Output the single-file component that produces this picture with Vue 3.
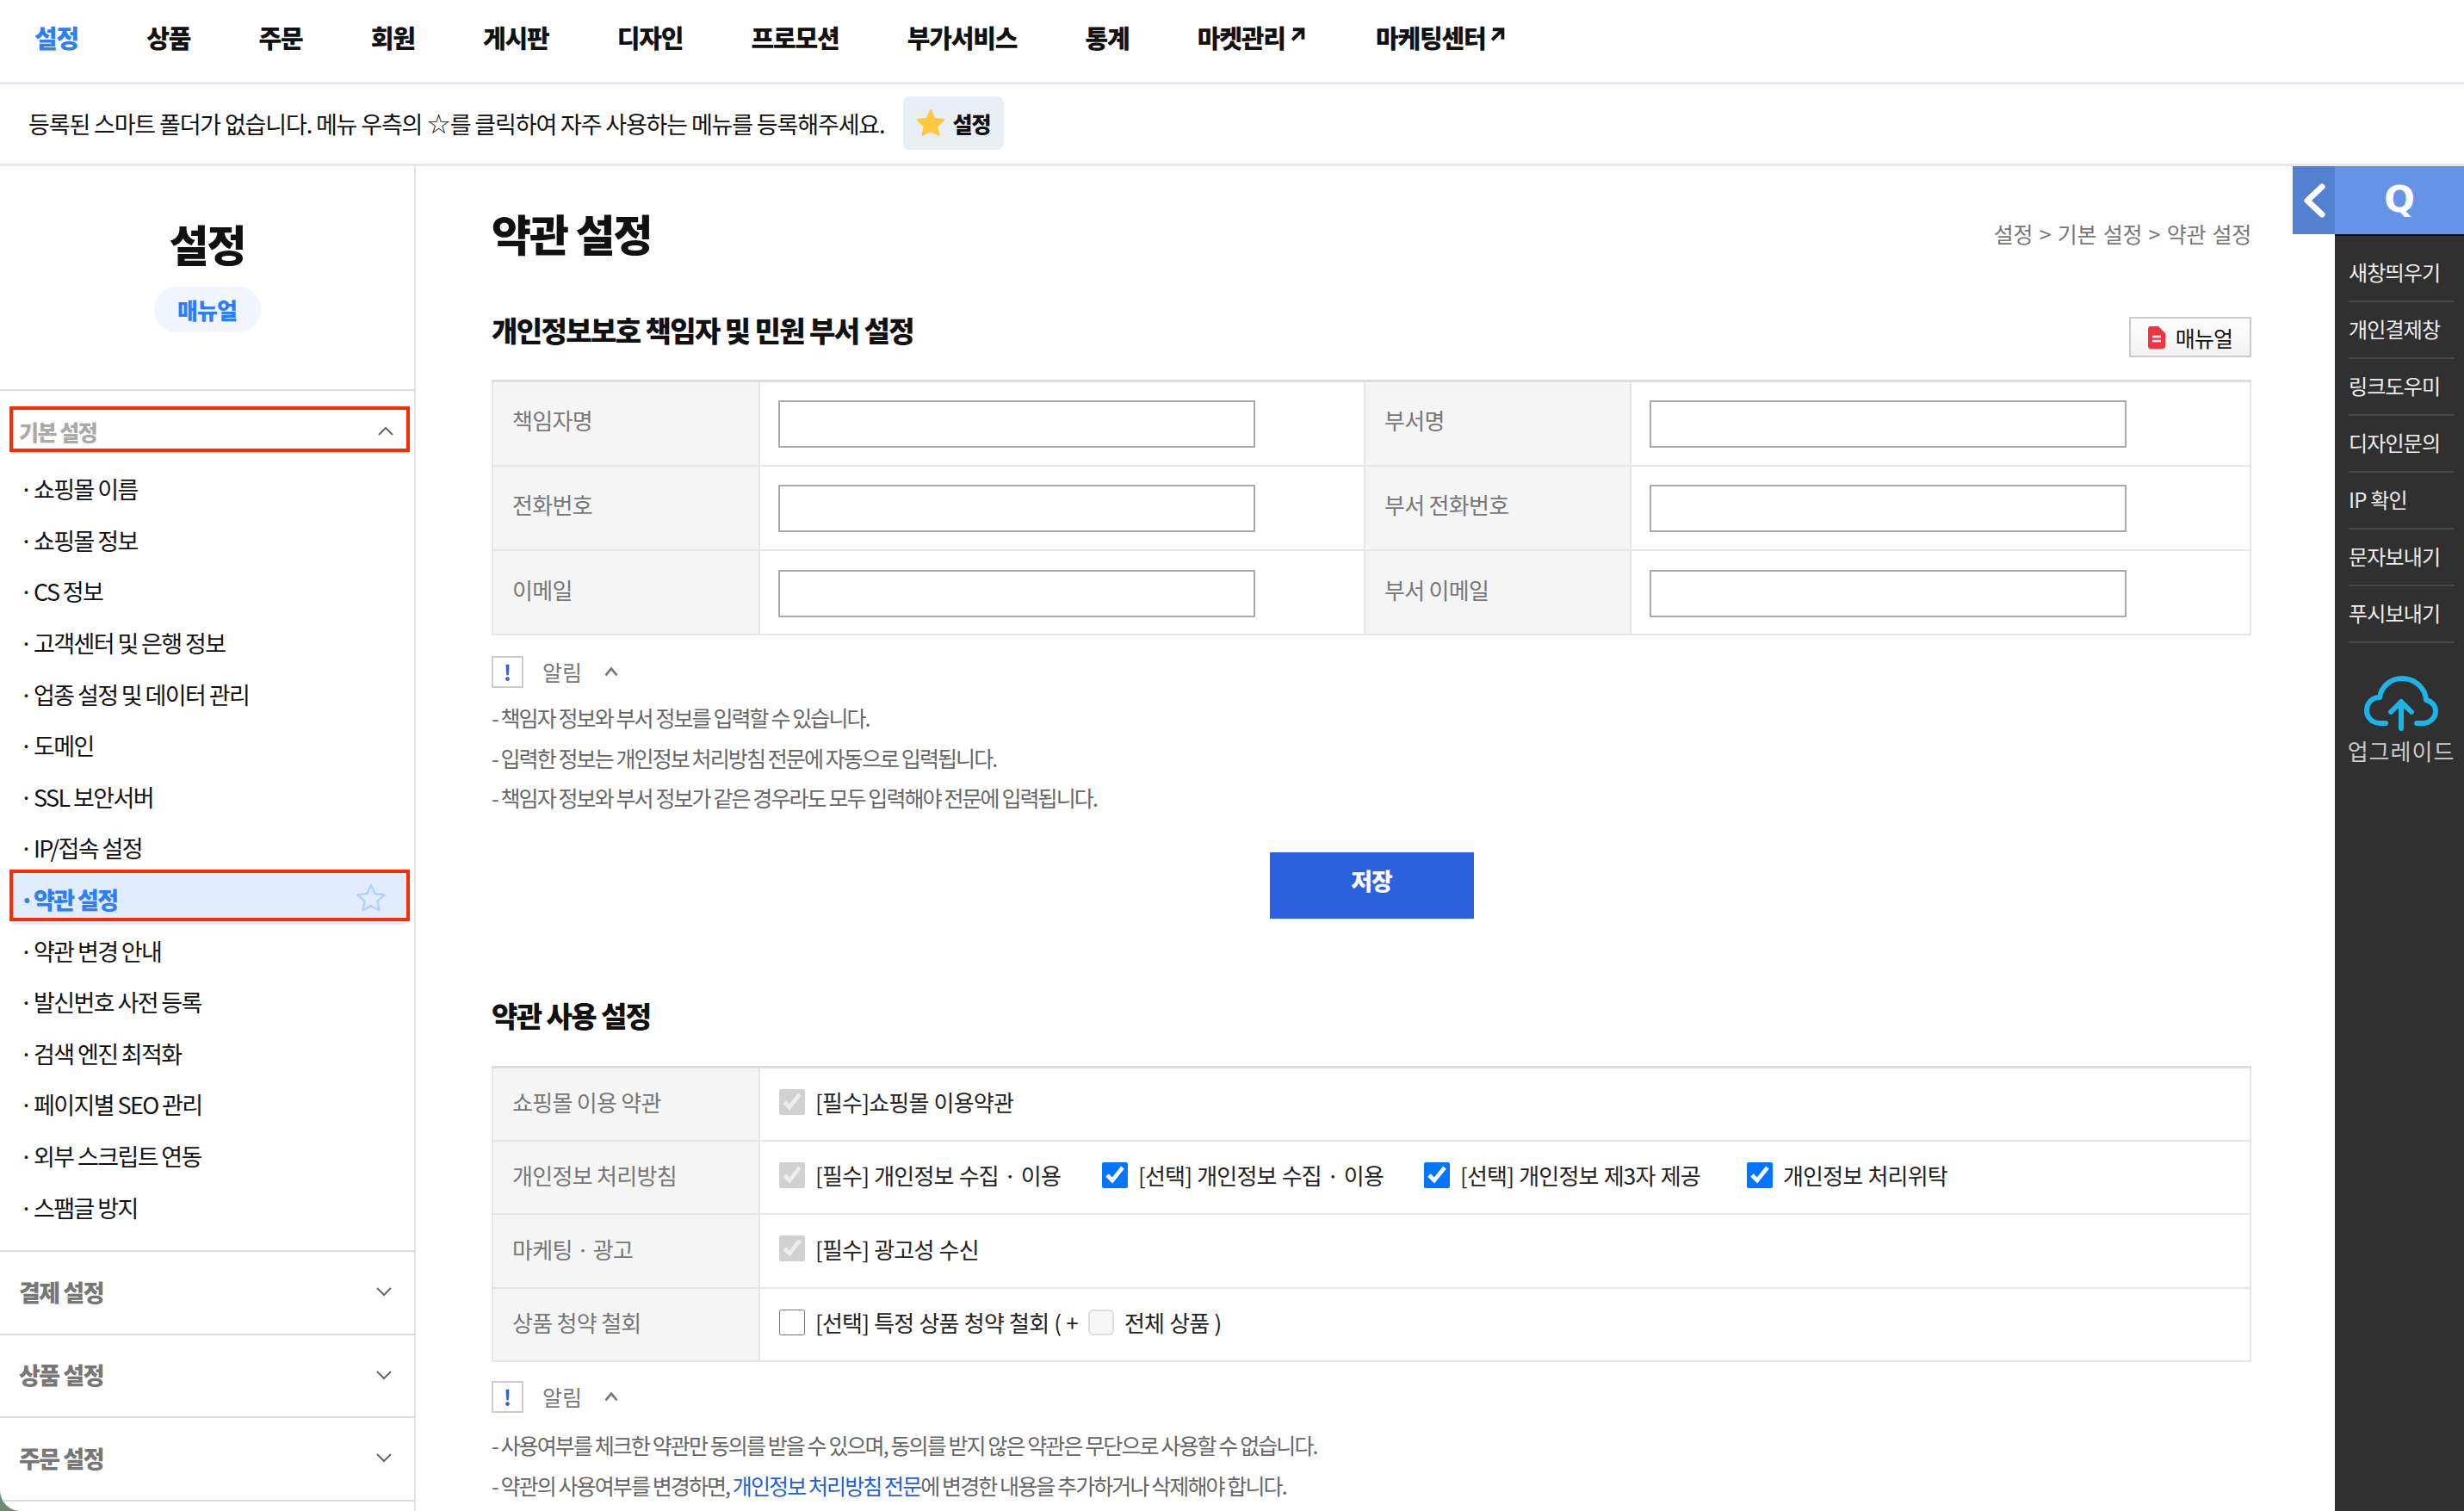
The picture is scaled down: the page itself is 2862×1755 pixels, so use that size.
<template>
  <div class="page">
    <nav class="gnb">
      <a v-for="(m, i) in gnb" :key="m.name" class="gnb-item" :class="{ on: i === 0 }">
        {{ m.name }}
        <svg v-if="m.ext" class="ext" viewBox="0 0 14 14"><path d="M3 2.5h9v9M11.5 3L2.5 12" fill="none" stroke="#111" stroke-width="3" /></svg>
      </a>
    </nav>

    <div class="smart-bar">
      <span>등록된 스마트 폴더가 없습니다. 메뉴 우측의 <b class="star-glyph">☆</b>를 클릭하여 자주 사용하는 메뉴를 등록해주세요.</span>
      <button class="smart-btn">
        <svg width="36" height="34" viewBox="0 0 24 24"><path d="M12 1.5l3.2 6.9 7.5.9-5.5 5.1 1.4 7.4L12 18.1l-6.6 3.7 1.4-7.4L1.3 9.3l7.5-.9z" fill="#ffc83d" stroke="#ffc83d" stroke-width="1.5" stroke-linejoin="round" /></svg>
        설정
      </button>
    </div>

    <div class="body">
      <aside class="side">
        <div class="side-head">
          <h2>설정</h2>
          <span class="pill">매뉴얼</span>
        </div>
        <div class="group-open">
          <div class="group-title first">
            기본 설정
            <svg class="chev" viewBox="0 0 20 12"><path d="M2 10l8-8 8 8" /></svg>
          </div>
          <ul class="side-list">
            <li v-for="item in sideItems" :key="item" :class="{ active: item === '약관 설정' }">
              <i>·</i>{{ item }}
              <svg v-if="item === '약관 설정'" class="side-star" viewBox="0 0 24 24"><path d="M12 2.5l2.9 6.3 6.9.8-5.1 4.7 1.4 6.8-6.1-3.4-6.1 3.4 1.4-6.8-5.1-4.7 6.9-.8z" fill="none" stroke="#b5d0ff" stroke-width="1.6" stroke-linejoin="round" /></svg>
            </li>
          </ul>
        </div>
        <div v-for="g in sideGroups" :key="g" class="group-title">
          {{ g }}
          <svg class="chev" viewBox="0 0 20 12"><path d="M2 2l8 8 8-8" /></svg>
        </div>
      </aside>

      <main class="main">
        <div class="page-head">
          <h1>약관 설정</h1>
          <span class="crumb">설정 &gt; 기본 설정 &gt; 약관 설정</span>
        </div>

        <div class="section-head">
          <h3>개인정보보호 책임자 및 민원 부서 설정</h3>
          <button class="manual-btn">
            <svg width="20" height="26" viewBox="0 0 20 26"><path d="M0 3a3 3 0 0 1 3-3h9l8 8v15a3 3 0 0 1-3 3H3a3 3 0 0 1-3-3z" fill="#f5333f" /><path d="M5 12h10M5 17h10" stroke="#fff" stroke-width="2.5" /></svg>
            매뉴얼
          </button>
        </div>

        <table class="form-table contact">
          <colgroup>
            <col class="col-th" />
            <col class="col-td" />
            <col class="col-th2" />
            <col />
          </colgroup>
          <tbody>
            <tr v-for="row in contactRows" :key="row[0]">
              <th>{{ row[0] }}</th>
              <td><input type="text" class="txt" /></td>
              <th>{{ row[1] }}</th>
              <td><input type="text" class="txt" /></td>
            </tr>
          </tbody>
        </table>

        <div class="notice-head">
          <span class="bang">!</span>
          <span>알림</span>
          <svg class="caret" viewBox="0 0 14 10"><path d="M2 8l5-6 5 6" /></svg>
        </div>
        <p v-for="n in notes1" :key="n" class="note">{{ n }}</p>

        <div class="save-row"><button class="save">저장</button></div>

        <h3 class="terms-title">약관 사용 설정</h3>

        <table class="form-table terms">
          <tbody>
            <tr>
              <th>쇼핑몰 이용 약관</th>
              <td><label class="chk"><input type="checkbox" checked disabled />[필수]쇼핑몰 이용약관</label></td>
            </tr>
            <tr>
              <th>개인정보 처리방침</th>
              <td>
                <label v-for="c in privacyChecks" :key="c.text" class="chk" :style="{ width: c.w + 'px' }">
                  <input type="checkbox" checked :disabled="c.locked" />{{ c.text }}
                </label>
              </td>
            </tr>
            <tr>
              <th>마케팅 · 광고</th>
              <td><label class="chk"><input type="checkbox" checked disabled />[필수] 광고성 수신</label></td>
            </tr>
            <tr>
              <th>상품 청약 철회</th>
              <td>
                <label class="chk"><input type="checkbox" />[선택] 특정 상품 청약 철회 ( +</label>
                <label class="chk sub"><input type="checkbox" disabled />전체 상품 )</label>
              </td>
            </tr>
          </tbody>
        </table>

        <div class="notice-head">
          <span class="bang">!</span>
          <span>알림</span>
          <svg class="caret" viewBox="0 0 14 10"><path d="M2 8l5-6 5 6" /></svg>
        </div>
        <p class="note">- 사용여부를 체크한 약관만 동의를 받을 수 있으며, 동의를 받지 않은 약관은 무단으로 사용할 수 없습니다.</p>
        <p class="note">- 약관의 사용여부를 변경하면, <a class="link">개인정보 처리방침 전문</a>에 변경한 내용을 추가하거나 삭제해야 합니다.</p>
      </main>
    </div>

    <!-- 우측 퀵메뉴 -->
    <div class="quick">
      <div class="quick-top">
        <span class="quick-toggle">
          <svg width="28" height="40" viewBox="0 0 28 40"><path d="M23 4L6 20l17 16" fill="none" stroke="#fff" stroke-width="7" stroke-linejoin="round" stroke-linecap="round" /></svg>
        </span>
        <span class="quick-q">Q</span>
      </div>
      <div class="quick-panel">
        <ul>
          <li v-for="q in quickItems" :key="q">{{ q }}</li>
        </ul>
        <div class="upgrade">
          <svg width="88" height="66" viewBox="0 0 88 66" fill="none" stroke="#1cb5e8" stroke-width="6" stroke-linecap="round" stroke-linejoin="round">
            <path d="M26 57H20C10 57 4 50 4 42c0-9 7-15 15-15 2-13 13-22 26-22 15 0 27 11 28 25 7 2 11 7 11 13 0 8-7 14-15 14H62" />
            <path d="M44 63V33M32 44l12-12 12 12" />
          </svg>
          <span>업그레이드</span>
        </div>
      </div>
    </div>
  </div>
</template>

<script setup>
const gnb = [
  { name: '설정' },
  { name: '상품' },
  { name: '주문' },
  { name: '회원' },
  { name: '게시판' },
  { name: '디자인' },
  { name: '프로모션' },
  { name: '부가서비스' },
  { name: '통계' },
  { name: '마켓관리', ext: true },
  { name: '마케팅센터', ext: true }
]

const sideItems = [
  '쇼핑몰 이름',
  '쇼핑몰 정보',
  'CS 정보',
  '고객센터 및 은행 정보',
  '업종 설정 및 데이터 관리',
  '도메인',
  'SSL 보안서버',
  'IP/접속 설정',
  '약관 설정',
  '약관 변경 안내',
  '발신번호 사전 등록',
  '검색 엔진 최적화',
  '페이지별 SEO 관리',
  '외부 스크립트 연동',
  '스팸글 방지'
]

const sideGroups = ['결제 설정', '상품 설정', '주문 설정']

const contactRows = [
  ['책임자명', '부서명'],
  ['전화번호', '부서 전화번호'],
  ['이메일', '부서 이메일']
]

const notes1 = [
  '- 책임자 정보와 부서 정보를 입력할 수 있습니다.',
  '- 입력한 정보는 개인정보 처리방침 전문에 자동으로 입력됩니다.',
  '- 책임자 정보와 부서 정보가 같은 경우라도 모두 입력해야 전문에 입력됩니다.'
]

const privacyChecks = [
  { text: '[필수] 개인정보 수집 · 이용', locked: true, w: 375 },
  { text: '[선택] 개인정보 수집 · 이용', w: 374 },
  { text: '[선택] 개인정보 제3자 제공', w: 375 },
  { text: '개인정보 처리위탁', w: 300 }
]

const quickItems = ['새창띄우기', '개인결제창', '링크도우미', '디자인문의', 'IP 확인', '문자보내기', '푸시보내기']
</script>

<style>
html,
body {
  margin: 0;
  background: #6e8a6f;
}
</style>

<style scoped>
.page {
  position: relative;
  width: 2862px;
  height: 1755px;
  overflow: hidden;
  background: #fff;
  border-bottom-left-radius: 24px;
  font-family: "Noto Sans CJK KR", "Noto Sans", sans-serif;
  color: #111;
}

.gnb {
  display: flex;
  align-items: center;
  height: 98px;
  padding-left: 40px;
  padding-bottom: 10px;
  box-sizing: border-box;
  border-bottom: 3px solid #e4e8f0;
}

.gnb-item {
  display: flex;
  align-items: center;
  margin-right: 79.3px;
  font-size: 29px;
  font-weight: 900;
  letter-spacing: -1.2px;
  white-space: nowrap;
}

.gnb-item.on {
  color: #2b7fff;
}

.ext {
  width: 18px;
  height: 18px;
  margin-left: 5px;
  margin-right: 3px;
  margin-top: -6px;
}

.smart-bar {
  display: flex;
  align-items: center;
  gap: 22px;
  height: 95px;
  padding-left: 33px;
  padding-bottom: 2px;
  box-sizing: border-box;
  border-bottom: 3px solid #e4e8f0;
  font-size: 27px;
  letter-spacing: -1.15px;
}

.star-glyph {
  font-family: "DejaVu Sans", sans-serif;
  font-weight: 700;
  font-size: 32px;
  line-height: 0;
}

.smart-btn {
  display: flex;
  align-items: center;
  gap: 7px;
  width: 117px;
  height: 62px;
  padding: 0 0 0 14px;
  border: 0;
  border-radius: 8px;
  background: #e9eef5;
  font: inherit;
  font-size: 25px;
  font-weight: 900;
  letter-spacing: -1px;
  color: #111;
}

.body {
  display: flex;
}

.side {
  flex: none;
  width: 483px;
  box-sizing: border-box;
  border-right: 2px solid #e2e2e2;
  height: 1563px;
}

.side-head {
  display: flex;
  flex-direction: column;
  align-items: center;
  height: 261px;
  box-sizing: border-box;
  padding-top: 57px;
  border-bottom: 2px solid #ddd;
}

.side-head h2 {
  margin: 0;
  font-size: 50px;
  line-height: 64px;
  font-weight: 900;
  letter-spacing: -2px;
}

.pill {
  display: flex;
  align-items: center;
  justify-content: center;
  width: 124px;
  height: 53px;
  margin-top: 19px;
  border-radius: 27px;
  background: #f0f5ff;
  color: #2b7fff;
  font-size: 26px;
  font-weight: 900;
  letter-spacing: -1px;
}

.group-open {
  padding: 18px 5px 0 11px;
  height: 1000px;
  box-sizing: border-box;
  border-bottom: 2px solid #ddd;
}

.group-title {
  position: relative;
  display: flex;
  align-items: center;
  justify-content: space-between;
  height: 96.5px;
  box-sizing: border-box;
  padding: 0 25px 2px 22px;
  border-bottom: 2px solid #ddd;
  color: #777;
  font-size: 27px;
  font-weight: 900;
  letter-spacing: -1.5px;
}

.group-title.first {
  height: 53px;
  padding: 4px 14px 0 7px;
  border: 4px solid #ff2a00;
  color: #aaa;
  font-size: 25px;
}

.chev {
  width: 20px;
  height: 12px;
  fill: none;
  stroke: #666;
  stroke-width: 2;
}

.side-list {
  margin: 13px 0 0;
  padding: 0;
  list-style: none;
}

.side-list li {
  position: relative;
  display: flex;
  align-items: center;
  height: 59.6px;
  padding-left: 12px;
  font-size: 27px;
  letter-spacing: -1.6px;
  white-space: nowrap;
}

.side-list li i {
  width: 16px;
  font-style: normal;
}

.side-list li.active {
  border-radius: 8px;
  background: #e2ecff;
  color: #2b7fff;
  font-weight: 900;
}

/* 빨간 박스는 항목보다 살짝 위로 어긋나 있음 */
.side-list li.active::after {
  content: "";
  position: absolute;
  left: 0;
  right: 0;
  top: -5px;
  height: 60px;
  box-sizing: border-box;
  border: 4px solid #ff2a00;
}

.side-star {
  position: absolute;
  right: 26px;
  top: 9px;
  width: 38px;
  height: 38px;
}

.main {
  flex: 1;
  padding: 48px 247px 0 88px;
  min-width: 0;
}

.page-head {
  display: flex;
  align-items: center;
  justify-content: space-between;
  height: 60px;
}

.page-head h1 {
  margin: -3px 0 0;
  font-size: 50px;
  font-weight: 900;
  letter-spacing: -2px;
}

.crumb {
  color: #777;
  font-size: 25px;
  letter-spacing: -0.3px;
  word-spacing: 2.2px;
}

.section-head {
  display: flex;
  align-items: flex-start;
  justify-content: space-between;
  margin-top: 67px;
  height: 47px;
}

h3 {
  margin: 0;
  font-size: 33px;
  line-height: 30px;
  font-weight: 900;
  letter-spacing: -1.6px;
}

.manual-btn {
  display: flex;
  align-items: center;
  justify-content: center;
  gap: 12px;
  width: 142px;
  height: 47px;
  padding: 0;
  border: 2px solid #ccc;
  background: linear-gradient(#fff, #f1f1f1);
  font: inherit;
  font-size: 25px;
  letter-spacing: -0.8px;
  color: #111;
}

.form-table {
  width: 100%;
  border-collapse: collapse;
  table-layout: fixed;
  border-top: 3px solid #ddd;
  font-size: 26px;
}

.form-table.contact {
  margin-top: 26px;
}

.col-th {
  width: 310px;
}

.col-td {
  width: 703px;
}

.col-th2 {
  width: 309px;
}

.form-table th,
.form-table td {
  box-sizing: border-box;
  padding: 0;
  border: 2px solid #e6e6e6;
  vertical-align: middle;
  text-align: left;
}

.form-table th {
  width: 310px;
  padding: 0 0 8px 22px;
  background: #f5f5f5;
  color: #777;
  font-weight: 400;
  letter-spacing: -0.7px;
}

.contact tr {
  height: 98.3px;
}

.contact td {
  padding: 2px 0 0 21px;
}

.txt {
  display: block;
  box-sizing: border-box;
  width: 554px;
  height: 55px;
  border: 2px solid #aaa;
  background: #fff;
}

.notice-head {
  display: flex;
  align-items: center;
  gap: 22px;
  margin-top: 24px;
  height: 36px;
  color: #777;
  font-size: 25px;
}

.terms + .notice-head {
  margin-top: 22px;
}

.bang {
  display: flex;
  align-items: center;
  justify-content: center;
  width: 37px;
  height: 37px;
  box-sizing: border-box;
  border: 2px solid #ccc;
  color: #2b60de;
  font-weight: 700;
}

.caret {
  width: 20px;
  height: 13px;
  margin-left: 2px;
  fill: none;
  stroke: #777;
  stroke-width: 2;
}

.note {
  margin: 0;
  color: #666;
  font-size: 25px;
  line-height: 46.5px;
  letter-spacing: -1.9px;
}

.notice-head + .note {
  margin-top: 12px;
}

.terms + .notice-head + .note {
  margin-top: 15px;
}

.link {
  color: #1f5fd8;
}

.save-row {
  display: flex;
  justify-content: center;
  margin-top: 40px;
}

.save {
  width: 237px;
  height: 77px;
  padding: 0 0 12px;
  border: 0;
  background: #2b60de;
  color: #fff;
  font: inherit;
  font-size: 27px;
  font-weight: 900;
  letter-spacing: -1px;
}

.terms-title {
  margin-top: 97px;
}

.form-table.terms {
  margin-top: 44px;
}

.terms tr {
  height: 85.5px;
}

.terms th {
  padding-bottom: 6px;
}

.terms td {
  padding: 0 0 2px 22px;
  color: #222;
}

.chk {
  display: inline-flex;
  align-items: center;
  gap: 12px;
  letter-spacing: -0.8px;
  word-spacing: 1px;
  white-space: nowrap;
}

.chk input {
  width: 30px;
  height: 30px;
  margin: 0;
}

.chk.sub {
  margin-left: 12px;
}

.chk.sub input {
  appearance: none;
  box-sizing: border-box;
  border: 2px solid #ddd;
  border-radius: 6px;
  background: #f7f7f7;
}

.quick {
  position: absolute;
  top: 193px;
  right: 0;
  bottom: 0;
  width: 199px;
}

.quick-top {
  display: flex;
  height: 79px;
}

.quick-toggle {
  display: flex;
  align-items: center;
  justify-content: center;
  width: 49px;
  background: #5480d0;
}

.quick-q {
  flex: 1;
  display: flex;
  align-items: center;
  justify-content: center;
  padding-bottom: 2px;
  background: #6594e6;
  color: #fff;
  font-family: "DejaVu Sans", sans-serif;
  font-size: 42px;
  font-weight: 700;
}

.quick-panel {
  box-sizing: border-box;
  height: 1483px;
  margin-left: 49px;
  padding: 11px 12px 0 16px;
  background: #303030;
  border-top: 2px solid #111;
  color: #eee;
}

.quick-panel ul {
  margin: 0;
  padding: 0;
  list-style: none;
}

.quick-panel li {
  height: 66px;
  box-sizing: border-box;
  border-bottom: 2px solid #4a4a4a;
  font-size: 24px;
  line-height: 62px;
  letter-spacing: -0.8px;
}

.upgrade {
  display: flex;
  flex-direction: column;
  align-items: center;
  margin-top: 36px;
  color: #ccc;
  font-size: 26px;
  letter-spacing: 1px;
}

.upgrade span {
  margin-top: 4px;
  white-space: nowrap;
}
</style>
